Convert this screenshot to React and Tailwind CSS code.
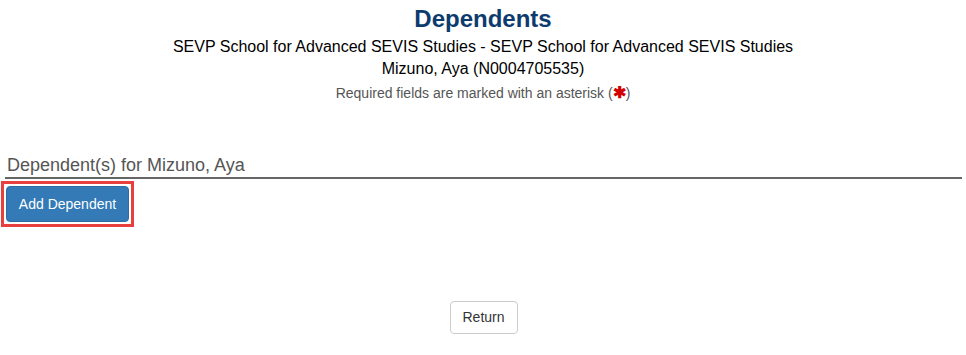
import React from "react";

const App = () => {
  return (
    <div className="min-h-[355px] w-[966px] bg-white font-['Liberation_Sans',Arial,sans-serif] text-[#333]">
      <div className="pt-[5px] text-center">
        <h1 className="text-[24px] font-bold leading-[28px] text-[#0d3b6e]">Dependents</h1>
        <p className="mt-[3px] text-[16px] leading-[22px] text-black">
          SEVP School for Advanced SEVIS Studies - SEVP School for Advanced SEVIS Studies
        </p>
        <p className="text-[16px] leading-[22px] text-black">Mizuno, Aya (N0004705535)</p>
        <p className="mt-[3px] text-[14px] leading-[20px] text-[#555]">
          Required fields are marked with an asterisk (<span className="text-[16px] font-bold text-[#d40000]">✱</span>)
        </p>
      </div>

      <div className="mt-[51px] px-[5px] pr-[4px]">
        <h2 className="border-b-[2px] border-[#666] pl-[2px] pb-[1px] text-[18px] leading-[22px] text-[#555]">
          Dependent(s) for Mizuno, Aya
        </h2>
      </div>

      <div className="ml-[1px] mt-[2px] inline-block border-[3px] border-[#e8403f] p-[2px]">
        <button className="h-[36px] w-[123px] rounded-[4px] border border-[#2e6da4] bg-[#337ab7] text-[14px] text-white">
          Add Dependent
        </button>
      </div>

      <div className="mt-[74px] flex justify-center">
        <button className="ml-[1px] h-[33px] w-[68px] rounded-[4px] border border-[#ccc] bg-white text-[14px] text-[#333]">
          Return
        </button>
      </div>
    </div>
  );
};

export default App;
